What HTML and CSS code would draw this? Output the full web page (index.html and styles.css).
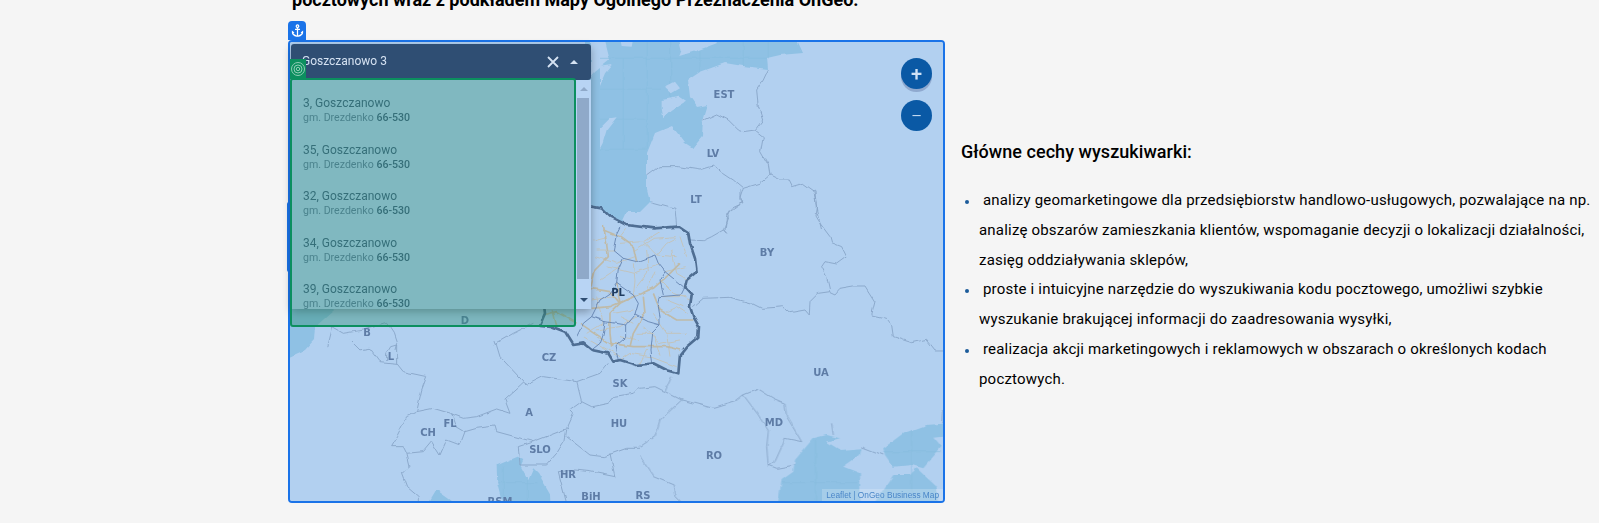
FILE: index.html
```html
<!DOCTYPE html>
<html lang="pl">
<head>
    <meta charset="UTF-8">
    <meta name="viewport" content="width=device-width, initial-scale=1.0">
    <title>Wyszukiwarka kodów pocztowych</title>
    <link rel="stylesheet" href="styles.css">
</head>
<body>
    <h2 class="page-title">pocztowych wraz z podkładem Mapy Ogólnego Przeznaczenia OnGeo.</h2>

    <section class="finder">
        <div class="map-frame">
            <span class="anchor-tab">
                <svg viewBox="0 0 24 24" width="15" height="15"><path fill="#fff" d="M17 15l1.55 1.55c-.96 1.69-3.33 3.04-5.55 3.37V11h3V9h-3V7.82C14.16 7.4 15 6.3 15 5c0-1.65-1.35-3-3-3S9 3.35 9 5c0 1.3.84 2.4 2 2.82V9H8v2h3v8.92c-2.22-.33-4.59-1.68-5.55-3.37L7 15l-4-3v3c0 3.88 4.92 7 9 7s9-3.12 9-7v-3l-4 3zM12 4c.55 0 1 .45 1 1s-.45 1-1 1-1-.45-1-1 .45-1 1-1z"/></svg>
            </span>
            <span class="resize-handle"></span>

            <svg class="map" viewBox="290 42 653 459">
                <defs>
                    <!-- hand drawn borders are too straight, this roughens them -->
                    <filter id="rough" filterUnits="userSpaceOnUse" x="270" y="22" width="693" height="499">
                        <feTurbulence type="fractalNoise" baseFrequency="0.09" numOctaves="2" seed="4"/>
                        <feDisplacementMap in="SourceGraphic" scale="4" xChannelSelector="R" yChannelSelector="G"/>
                        <feGaussianBlur stdDeviation="0.35"/>
                    </filter>
                </defs>
                <rect class="land" x="290" y="42" width="653" height="459"/>

                <g filter="url(#rough)">
                    <!-- baltic -->
                    <polygon class="sea" points="585,38 796,38 803,53 780,55 767,58 768,69 743,66 725,63 700,72 688,80 690,97 697,107 707,105 703,118 702,137 693,148 685,143 672,126 655,133 647,153 647,190 650,202 640,212 627,212 620,227 600,216 585,210"/>
                    <polygon class="land" points="591,36 605,40 610,60 600,68 595,72 591,77"/>
                    <g transform="translate(600 30) scale(.3333)">
                        <path class="sea-grid" d="M70 85V355M142 30V355M212 30V240M0 85H500M0 178H180M0 268H140M0 358H140M300 30V125M430 30V108M505 30V85"/>
                        <polygon class="land" points="235,20 245,60 238,78 290,62 350,40 350,20"/>
                        <polygon class="land" points="0,110 35,105 15,130 0,165"/>
                        <polygon class="land" points="0,295 30,265 50,262 20,300 8,340 0,355"/>
                        <polygon class="land" points="185,210 240,200 258,212 215,240 190,265 185,235"/>
                        <polygon class="land" points="195,170 225,155 240,175 215,190"/>
                        <polygon class="land" points="60,25 100,25 95,50 65,48"/>
                        <g class="border">
                            <path d="M310 270L350 252L385 270L415 300L430 305L465 300"/>
                            <path d="M505 118L490 150L470 180L475 230L488 270L465 300L490 320L482 365L505 405L510 435"/>
                            <path d="M142 438L180 410L235 410L300 420L340 408L370 430L400 450L430 475"/>
                            <path d="M510 435L480 460L430 475L420 505L432 518L395 535L380 560L375 600"/>
                            <path d="M510 435L540 450L565 450L575 470L610 460L645 485L650 540L665 600"/>
                            <path d="M150 515L225 535L230 590"/>
                        </g>
                    </g>

                    <!-- north sea, adriatic, black sea -->
                    <polygon class="sea" points="280,300 345,300 333,311 315,327 314,340 305,350 280,361"/>
                    <g transform="translate(280 340) scale(.3333)">
                        <polygon class="sea" points="650,375 710,350 730,360 722,378 745,420 760,385 775,400 810,460 812,500 670,500 652,430"/>
                        <polygon class="sea" points="440,500 470,450 540,500"/>
                        <path class="sea-grid" d="M670 380V500M742 420V500M652 428H775"/>
                        <g class="border">
                            <path d="M210 0L240 30L270 25L300 65L350 70L370 95L440 110L425 150L410 215"/>
                            <path d="M320 60L320 40L332 20L350 15L350 70"/>
                            <path d="M410 215L380 230L350 290L332 320L370 320L380 340L430 335L455 305L480 345L500 300L540 315L555 275"/>
                            <path d="M410 215L460 205L510 220L550 235L590 230L650 207L690 220L675 180L730 130L740 135L790 110L890 125"/>
                            <path d="M515 220L530 260L555 275L590 265L645 258L650 275L760 305L850 270L865 265"/>
                            <path d="M890 125L905 185L870 210L880 220L860 265"/>
                            <path d="M645 0L660 50L735 130"/>
                            <path d="M890 125L960 100L985 70"/>
                            <path d="M905 185L935 200L985 190L1000 170L1060 160L1080 140"/>
                            <path d="M760 305L715 320L720 375L800 375L830 340L855 300L860 270"/>
                            <path d="M860 290L930 345L970 350L1040 325L1080 325"/>
                            <path d="M990 340L1005 410L930 395L885 390L835 395L860 490"/>
                            <path d="M380 340L390 380L365 400L380 440L415 470L415 490"/>
                        </g>
                    </g>
                    <g transform="translate(280 170) scale(.3333)">
                        <g class="border">
                            <path d="M155 470L190 490L250 480L320 460L340 490L350 520L345 540"/>
                            <path d="M155 470L140 530"/>
                            <path d="M640 525L700 490L760 460"/>
                        </g>
                    </g>
                    <g transform="translate(640 340) scale(.3333)">
                        <polygon class="sea" points="412,500 425,420 460,395 465,360 520,295 560,285 600,295 560,305 600,330 665,325 660,345 610,380 660,400 662,500"/>
                        <polygon class="sea" points="730,325 790,280 860,255 925,250 925,285 880,290 905,320 850,385 815,375 760,380 735,345"/>
                        <polygon class="sea" points="695,500 760,405 810,405 830,385 890,440 895,500"/>
                        <path class="sea-grid" d="M527 300V500M815 270V500M425 428H660M730 335H905"/>
                        <g class="border">
                            <path d="M95 110L75 155L45 140L0 145"/>
                            <path d="M75 155L125 180L220 205L285 185L310 165L355 147L400 175L435 190L440 230L485 305L435 295L430 310L405 365L385 380L380 320L385 275L355 225L310 165"/>
                            <path d="M125 180L60 240L45 290L0 320"/>
                            <path d="M0 350L40 410L100 435L105 470L125 490"/>
                            <path d="M385 375L410 385L465 375"/>
                            <path d="M575 250L580 285"/>
                            <path d="M665 320L730 345"/>
                            <path d="M908 210L905 250"/>
                        </g>
                    </g>
                    <g transform="translate(690 190) scale(.3333)">
                        <g class="border">
                            <path d="M150 0L150 30L162 35L120 65L100 118L110 130L100 120L65 140L40 152L0 150"/>
                            <path d="M370 0L380 45L375 75L390 100L420 140L425 158L455 170L470 200L440 222L405 215L395 230L410 260L420 305"/>
                            <path d="M10 350L40 325L120 322L185 340L215 355L260 352L280 350L300 368L345 360L358 375L360 335L385 310L420 305L435 312L450 295L490 288L525 288L555 335L545 375L590 385L605 405L610 440L665 458L710 448L735 480L760 480"/>
                        </g>
                    </g>

                    <!-- poland -->
                    <g transform="translate(520 200) scale(.3333)">
                        <polygon class="land" points="215,20 245,25 270,50 320,75 400,85 475,80 505,100 510,130 525,175 530,215 500,240 495,262 515,285 510,320 520,350 537,380 535,410 500,440 480,465 475,520 440,510 400,490 350,495 300,480 280,485 265,460 215,450 190,430 160,435 135,395 90,378 60,375 75,340 70,300 60,250 30,150 0,60 100,20"/>
                        <g class="road-thin">
                            <path d="M320 85L300 110M345 150L400 115L470 110M410 165L440 130L470 115"/>
                            <path d="M435 215L500 200M430 290L500 290M230 150L285 150M340 190L345 240L340 290"/>
                            <path d="M420 240L460 280L510 300M300 480L330 460L390 470L470 500"/>
                            <path d="M300 130L370 125L420 95M370 125L410 165L470 170M260 200L340 220L420 190"/>
                            <path d="M230 290L250 370L200 400M400 340L440 400L500 400M350 400L400 400L420 470"/>
                            <path d="M300 350L340 370M240 240L300 200M440 300L490 320"/>
                            <path d="M220 120L260 110M225 170L290 190L345 170M380 150L385 215L350 260"/>
                            <path d="M455 150L470 220L505 240M480 110L500 170M405 215L380 275"/>
                            <path d="M215 300L280 290M230 390L300 380L350 350M300 410L360 420M190 410L260 450"/>
                            <path d="M430 340L470 320L500 340M440 400L450 470M370 380L420 430L480 420"/>
                            <path d="M280 340L340 330M250 440L300 470M380 450L360 490"/>
                        </g>
                        <g class="road-wide">
                            <path d="M250 75L260 130L265 170L225 210L213 260"/>
                            <path d="M250 90L300 110L340 140L350 185"/>
                            <path d="M213 265L270 275L300 310L340 290L400 265L440 230L480 190"/>
                            <path d="M340 290L270 320L215 325"/>
                            <path d="M290 250L300 310L270 340L270 400L275 440"/>
                            <path d="M180 370L270 430L340 440L440 440L480 450"/>
                            <path d="M400 280L420 330L470 360L520 360"/>
                            <path d="M370 290L375 340L340 400L330 440"/>
                            <path d="M70 345L110 335L170 370"/>
                            <path d="M100 335L110 380"/>
                        </g>
                        <g class="admin">
                            <path d="M300 80L290 100L280 150L310 175L350 185L405 165L415 190L435 215L490 260"/>
                            <path d="M435 215L420 240L430 285"/>
                            <path d="M310 175L295 210L290 250L270 280L240 300L215 350L190 370L170 410"/>
                            <path d="M340 285L355 310L345 345L320 375L320 410L285 440L295 480"/>
                            <path d="M420 290L415 320L420 350L420 375L385 365L345 345"/>
                            <path d="M490 265L480 285L420 290"/>
                            <path d="M420 375L395 400L390 450L395 490"/>
                            <path d="M255 365L250 400L240 430L215 450"/>
                            <path d="M215 350L255 365L320 375"/>
                            <path d="M290 250L340 285"/>
                        </g>
                        <polygon class="pl-border" points="215,20 245,25 270,50 320,75 400,85 475,80 505,100 510,130 525,175 530,215 500,240 495,262 515,285 510,320 520,350 537,380 535,410 500,440 480,465 475,520 440,510 400,490 350,495 300,480 280,485 265,460 215,450 190,430 160,435 135,395 90,378 60,375 75,340 70,300 60,250 30,150 0,60 100,20"/>
                    </g>
                </g>

                <g class="labels">
                    <text x="724" y="98">EST</text>
                    <text x="713" y="157">LV</text>
                    <text x="696" y="203">LT</text>
                    <text x="767" y="256">BY</text>
                    <text class="label-pl" x="618" y="296">PL</text>
                    <text x="465" y="324">D</text>
                    <text x="367" y="336">B</text>
                    <text x="391" y="360">L</text>
                    <text x="549" y="361">CZ</text>
                    <text x="620" y="387">SK</text>
                    <text x="529" y="416">A</text>
                    <text x="450" y="427">FL</text>
                    <text x="428" y="436">CH</text>
                    <text x="540" y="453">SLO</text>
                    <text x="619" y="427">HU</text>
                    <text x="568" y="478">HR</text>
                    <text x="591" y="500">BiH</text>
                    <text x="643" y="499">RS</text>
                    <text x="714" y="459">RO</text>
                    <text x="774" y="426">MD</text>
                    <text x="821" y="376">UA</text>
                    <text x="500" y="505">RSM</text>
                </g>
            </svg>

            <div class="search-box">
                <div class="search-head">
                    <span class="search-value">Goszczanowo 3</span>
                    <svg class="search-clear" viewBox="0 0 12 12" width="12" height="12"><path d="M1 1L11 11M11 1L1 11"/></svg>
                    <span class="caret-up"></span>
                </div>
                <div class="search-list">
                    <ul class="results">
                        <li><span class="result-name">3, Goszczanowo</span><span class="result-sub">gm. Drezdenko <b>66-530</b></span></li>
                        <li><span class="result-name">35, Goszczanowo</span><span class="result-sub">gm. Drezdenko <b>66-530</b></span></li>
                        <li><span class="result-name">32, Goszczanowo</span><span class="result-sub">gm. Drezdenko <b>66-530</b></span></li>
                        <li><span class="result-name">34, Goszczanowo</span><span class="result-sub">gm. Drezdenko <b>66-530</b></span></li>
                        <li><span class="result-name">39, Goszczanowo</span><span class="result-sub">gm. Drezdenko <b>66-530</b></span></li>
                    </ul>
                    <div class="scrollbar">
                        <span class="scroll-up"></span>
                        <span class="scroll-thumb"></span>
                        <span class="scroll-down"></span>
                    </div>
                </div>
            </div>

            <div class="drop-zone"></div>
            <span class="target-tab">
                <svg viewBox="0 0 16 16" width="16" height="16"><g fill="none" stroke="#8fcdb5"><circle cx="8" cy="8" r="6.5"/><circle cx="8" cy="8" r="4"/><circle cx="8" cy="8" r="1.7"/></g></svg>
            </span>

            <div class="zoom-controls">
                <span class="zoom-btn zoom-in">+</span>
                <span class="zoom-btn">&minus;</span>
            </div>
            <div class="attribution">Leaflet | OnGeo Business Map</div>
        </div>

        <div class="features">
            <h3>Główne cechy wyszukiwarki:</h3>
            <ul>
                <li>&nbsp;analizy geomarketingowe dla przedsiębiorstw handlowo-usługowych, pozwalające na np. analizę obszarów zamieszkania klientów, wspomaganie decyzji o lokalizacji działalności, zasięg oddziaływania sklepów,</li>
                <li>&nbsp;proste i intuicyjne narzędzie do wyszukiwania kodu pocztowego, umożliwi szybkie wyszukanie brakującej informacji do zaadresowania wysyłki,</li>
                <li>&nbsp;realizacja akcji marketingowych i reklamowych w obszarach o określonych kodach pocztowych.</li>
            </ul>
        </div>
    </section>
</body>
</html>
```

FILE: styles.css
```css
html, body {
    height: 100%;
    overflow: hidden;
}
body {
    margin: 0;
    background: #f5f5f5;
    font-family: Roboto, sans-serif;
    color: #000;
}
.page-title {
    margin: -12px 0 0 292px;
    font-size: 18px;
    line-height: 24px;
    font-weight: 700;
    color: #000;
}

.finder {
    display: flex;
    align-items: flex-start;
    gap: 16px;
    margin: 28px 0 0 288px;
}

/* map */
.map-frame {
    position: relative;
    flex: none;
    width: 653px;
    height: 459px;
    border: 2px solid #1a73e8;
    border-radius: 4px;
    background: #b2d0f0;
}
.map {
    display: block;
    width: 653px;
    height: 459px;
    border-radius: 2px;
}
.land { fill: #b2d0f0; }
.sea { fill: #8fc1e4; }
.sea-grid { fill: none; stroke: #88bcdf; stroke-width: 2; }
.border path { fill: none; stroke: #86a3c6; stroke-width: 2.6; stroke-linejoin: round; }
.road-wide path { fill: none; stroke: #bfbaa8; stroke-width: 5; stroke-linejoin: round; }
.road-thin path { fill: none; stroke: #c2c4bd; stroke-width: 3; stroke-linejoin: round; }
.admin path { fill: none; stroke: #5a7aa8; stroke-width: 2.4; stroke-linejoin: round; }
.pl-border { fill: none; stroke: #4f6e93; stroke-width: 8; stroke-linejoin: round; }
.labels text {
    font-family: "DejaVu Sans", sans-serif;
    font-size: 10px;
    font-weight: 700;
    fill: #5e7ca6;
    text-anchor: middle;
}
.labels .label-pl { fill: #1f3c60; }

.anchor-tab {
    position: absolute;
    left: -2px;
    top: -21px;
    display: flex;
    align-items: center;
    justify-content: center;
    width: 18px;
    height: 19px;
    background: #1a73e8;
    border-radius: 4px 4px 0 0;
}
.resize-handle {
    position: absolute;
    left: -3px;
    top: 160px;
    width: 3px;
    height: 70px;
    background: #1a73e8;
    border-radius: 2px 0 0 2px;
}

/* search box */
.search-box {
    position: absolute;
    left: 1px;
    top: 2px;
    width: 300px;
    box-shadow: 0 3px 8px rgba(0, 0, 0, 0.3);
    border-radius: 3px;
}
.search-head {
    display: flex;
    align-items: center;
    height: 36px;
    padding: 0 13px 0 11px;
    background: #2f4e73;
    border-radius: 3px;
    color: #d5e2f2;
    font-size: 12px;
}
.search-value {
    flex: 1;
    margin-top: -2px;
}
.search-clear path { fill: none; stroke: #d5e2f2; stroke-width: 1.8; }
.caret-up {
    margin-left: 11px;
    border: 4px solid transparent;
    border-top: 0;
    border-bottom: 4px solid #d5e2f2;
}
.search-list {
    display: flex;
    height: 229px;
    overflow: hidden;
    background: #b8d4f4;
}
.results {
    flex: 1;
    margin: 0;
    padding: 16px 0 0 12px;
    list-style: none;
}
.results li {
    height: 46.6px;
}
.result-name {
    display: block;
    font-size: 12px;
    line-height: 15px;
    color: #3b5a7d;
}
.result-sub {
    display: block;
    font-size: 10.6px;
    line-height: 14px;
    color: #5d7a9d;
}
.result-sub b {
    font-weight: 500;
    color: #3b5a7d;
}
.scrollbar {
    position: relative;
    flex: none;
    width: 14px;
    background: #b8d4f4;
}
.scroll-up, .scroll-down {
    position: absolute;
    left: 3px;
    border: 4px solid transparent;
}
.scroll-up {
    top: 7px;
    border-top: 0;
    border-bottom: 4px solid #8fa9c9;
}
.scroll-down {
    bottom: 7px;
    border-bottom: 0;
    border-top: 4px solid #2f4e73;
}
.scroll-thumb {
    position: absolute;
    left: 0;
    top: 18px;
    width: 12px;
    height: 181px;
    background: #8fa9c9;
}

/* drop zone laid over the search box */
.drop-zone {
    position: absolute;
    left: 0;
    top: 36px;
    box-sizing: border-box;
    width: 286px;
    height: 249px;
    background: rgba(44, 142, 114, 0.4);
    border: 2px solid #0c8f5f;
    border-radius: 3px;
}
.target-tab {
    position: absolute;
    left: 0;
    top: 17px;
    display: flex;
    align-items: center;
    justify-content: center;
    width: 16px;
    height: 20px;
    background: #0c8f5f;
}

.zoom-controls {
    position: absolute;
    right: 11px;
    top: 16px;
    display: flex;
    flex-direction: column;
    gap: 11px;
}
.zoom-btn {
    display: flex;
    align-items: center;
    justify-content: center;
    width: 31px;
    height: 31px;
    border-radius: 50%;
    background: #0a59a5;
    color: #cfe2f6;
    font-size: 20px;
    font-weight: 300;
}
.zoom-in {
    box-shadow: 0 3px 0 #8fa9cf;
    font-weight: 500;
}
.attribution {
    position: absolute;
    right: 0;
    bottom: 0;
    height: 12px;
    padding: 0 4px;
    background: rgba(255, 255, 255, 0.2);
    color: #4a86c8;
    font-family: "Liberation Sans", sans-serif;
    font-size: 8.3px;
    line-height: 12px;
}

/* right column */
.features {
    flex: 1;
    padding-top: 100px;
}
.features h3 {
    margin: 0 0 22px;
    font-size: 18px;
    line-height: 24px;
    font-weight: 500;
    letter-spacing: 0.05px;
}
.features ul {
    margin: 0;
    padding: 0 0 0 18px;
}
.features li {
    font-size: 15px;
    font-weight: 450;
    letter-spacing: 0.2px;
    line-height: 29.8px;
}
.features li::marker {
    color: #1c5b9a;
    font-size: 11.5px;
}
```
